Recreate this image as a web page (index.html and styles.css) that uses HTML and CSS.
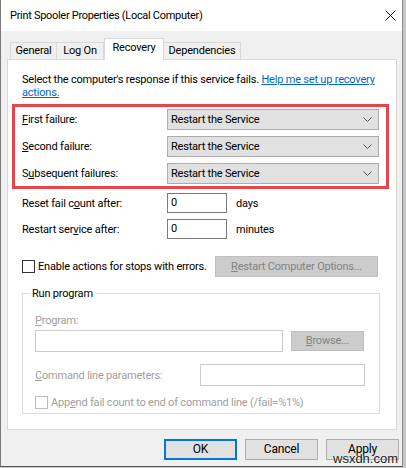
FILE: index.html
```html
<!DOCTYPE html>
<html lang="en">
<head>
  <meta charset="UTF-8">
  <title>Print Spooler Properties (Local Computer)</title>
  <link rel="stylesheet" href="styles.css">
</head>
<body>
  <div class="window">
    <div class="titlebar">
      <span class="title">Print Spooler Properties (Local Computer)</span>
      <svg class="close" width="11" height="11" viewBox="0 0 11 11">
        <path d="M0.5 0.5L10.5 10.5M10.5 0.5L0.5 10.5" stroke="#111" stroke-width="1" fill="none"/>
      </svg>
    </div>

    <div class="tabs">
      <div class="tab tab-general">General</div>
      <div class="tab tab-logon">Log On</div>
      <div class="tab tab-recovery active">Recovery</div>
      <div class="tab tab-deps">Dependencies</div>
    </div>

    <div class="panel">
      <p class="intro">Select the computer's response if this service fails. <a href="#">Help me set up recovery<br>actions.</a></p>

      <!-- failure actions, highlighted -->
      <div class="failures">
        <label><u>F</u>irst failure:</label>
        <div class="select">Restart the Service
          <svg width="9" height="5" viewBox="0 0 9 5"><polyline points="0.5,0.5 4.5,4.5 8.5,0.5" stroke="#555" fill="none"/></svg>
        </div>
        <label><u>S</u>econd failure:</label>
        <div class="select">Restart the Service
          <svg width="9" height="5" viewBox="0 0 9 5"><polyline points="0.5,0.5 4.5,4.5 8.5,0.5" stroke="#555" fill="none"/></svg>
        </div>
        <label>S<u>u</u>bsequent failures:</label>
        <div class="select">Restart the Service
          <svg width="9" height="5" viewBox="0 0 9 5"><polyline points="0.5,0.5 4.5,4.5 8.5,0.5" stroke="#555" fill="none"/></svg>
        </div>
      </div>

      <div class="counts">
        <label>Reset fail c<u>o</u>unt after:</label>
        <div class="input">0</div>
        <span>days</span>
        <label>Restart ser<u>v</u>ice after:</label>
        <div class="input">0</div>
        <span>minutes</span>
      </div>

      <div class="stops">
        <span class="check"></span>
        <span class="check-label">Enable actions for stops with errors.</span>
        <div class="btn disabled restart-opts"><u>R</u>estart Computer Options...</div>
      </div>

      <fieldset class="group">
        <legend>Run program</legend>
        <div class="dim program-label"><u>P</u>rogram:</div>
        <div class="program-row">
          <div class="input dim-input program-input"></div>
          <div class="btn disabled browse"><u>B</u>rowse...</div>
        </div>
        <div class="cmd-row">
          <span class="dim"><u>C</u>ommand line parameters:</span>
          <div class="input dim-input cmd-input"></div>
        </div>
        <div class="append-row">
          <span class="check dim-check"></span>
          <span class="dim">App<u>e</u>nd fail count to end of command line (/fail=%1%)</span>
        </div>
      </fieldset>
    </div>

    <div class="footer">
      <div class="btn default">OK</div>
      <div class="btn">Cancel</div>
      <div class="btn">Apply</div>
    </div>
  </div>

  <div class="watermark">wsxdn.com</div>
</body>
</html>
```

FILE: styles.css
```css
body {
  margin: 0;
  background-color: #c8c8c8;
  font-family: Roboto, "Liberation Sans", Arial, sans-serif;
  font-size: 11px;
  letter-spacing: -0.2px;
  color: #000;
}

.window {
  position: relative;
  width: 403px;
  height: 467px;
  box-sizing: border-box;
  background-color: #f0f0f0;
  border-left: 1px solid #7a7a7a;
  border-right: 1px solid #8a8a8a;
  border-bottom: 1px solid #555;
}

.titlebar {
  height: 31px;
  background-color: #fff;
  display: flex;
  align-items: center;
  padding-left: 9px;
}
.title {
  font-size: 11px;
  line-height: 15px;
  letter-spacing: -0.3px;
}
.close {
  margin-left: auto;
  margin-right: 6px;
}

/* tabs */
.tabs {
  display: flex;
  align-items: flex-end;
  margin-top: 7px;
  padding-left: 9px;
  height: 21px;
  position: relative;
  z-index: 1;
}
.tab {
  box-sizing: border-box;
  height: 17px;
  line-height: 16px;
  text-align: center;
  white-space: nowrap;
  background-color: #f0f0f0;
  border: 1px solid #d9d9d9;
  border-bottom: none;
}
.tab + .tab {
  border-left: none;
}
.tab-general { width: 47px; }
.tab-logon { width: 47px; }
.tab-recovery { width: 60px; }
.tab-deps { width: 77px; }
.tab.active {
  height: 22px;
  margin-bottom: -1px;
  line-height: 18px;
  background-color: #fff;
  border-left: 1px solid #d9d9d9;
}
.tab.active + .tab {
  border-left: none;
}

.panel {
  box-sizing: border-box;
  height: 371px;
  margin: 0 5px 0 6px;
  padding: 13px 7px 0 4px;
  background-color: #fff;
  border: 1px solid #d9d9d9;
}

.intro {
  margin: 0 0 0 10px;
  line-height: 13px;
  white-space: nowrap;
}
.intro a {
  color: #0066cc;
}

.failures {
  margin-top: 5px;
  width: 377px;
  box-sizing: border-box;
  border: 3px solid #e4464d;
  padding: 2px 0 2px 7px;
  display: grid;
  grid-template-columns: 145px 212px;
  grid-auto-rows: 21px;
  row-gap: 6px;
  align-items: center;
}
.select {
  box-sizing: border-box;
  height: 21px;
  background-color: #e1e1e1;
  border: 1px solid #adadad;
  padding: 0 6px 0 3px;
  display: flex;
  align-items: center;
  justify-content: space-between;
}

.input {
  box-sizing: border-box;
  background-color: #fff;
  border: 1px solid #7a7a7a;
  padding-left: 3px;
  line-height: 18px;
}

.counts {
  margin: 4px 0 0 10px;
  display: grid;
  grid-template-columns: 145px 60px auto;
  grid-auto-rows: 20px;
  row-gap: 6px;
  align-items: center;
}
.counts span {
  margin-left: 9px;
}
.counts .input {
  height: 20px;
}

.stops {
  margin: 17px 0 0 10px;
  width: 356px;
  display: flex;
  align-items: center;
  white-space: nowrap;
}
.check {
  box-sizing: border-box;
  width: 13px;
  height: 13px;
  border: 1px solid #333;
  background-color: #fff;
  margin-right: 3px;
  flex: none;
}
.btn {
  box-sizing: border-box;
  height: 21px;
  width: 73px;
  line-height: 19px;
  text-align: center;
  white-space: nowrap;
  background-color: #e1e1e1;
  border: 1px solid #adadad;
}
.btn.disabled {
  background-color: #cccccc;
  border-color: #bfbfbf;
  color: #838383;
}
.restart-opts {
  width: 163px;
  margin-left: auto;
  flex: none;
}

/* run program group */
.group {
  margin: 9px 0 0 10px;
  width: 358px;
  height: 128px;
  box-sizing: border-box;
  border: 1px solid #dcdcdc;
  padding: 0 12px;
}
.group legend {
  padding: 0 2px;
  margin-left: -5px;
  line-height: 15px;
}
.dim {
  color: #a0a0a0;
}
.dim-input {
  border-color: #cccccc;
}
.dim-check {
  border-color: #bcbcbc;
}
.program-label {
  margin-top: 12px;
  line-height: 15px;
}
.program-row {
  margin-top: 2px;
  display: flex;
  align-items: center;
}
.program-input {
  width: 248px;
  height: 22px;
}
.browse {
  margin-left: 8px;
  height: 20px;
  line-height: 18px;
}
.cmd-row {
  margin-top: 12px;
  width: 330px;
  display: flex;
  align-items: center;
  justify-content: space-between;
}
.cmd-input {
  width: 165px;
  height: 22px;
}
.append-row {
  margin-top: 10px;
  display: flex;
  align-items: center;
  white-space: nowrap;
}

.footer {
  margin-top: 9px;
  padding-right: 3px;
  display: flex;
  justify-content: flex-end;
  gap: 8px;
  font-size: 12px;
}
.btn.default {
  border-color: #0078d7;
  box-shadow: inset 0 0 0 1px #0078d7;
}

.watermark {
  position: absolute;
  left: 333px;
  top: 451px;
  font-family: "Liberation Sans", Arial, sans-serif;
  font-size: 13px;
  letter-spacing: 0;
  color: #222;
  text-shadow: 0 0 2px #fff;
}
```
